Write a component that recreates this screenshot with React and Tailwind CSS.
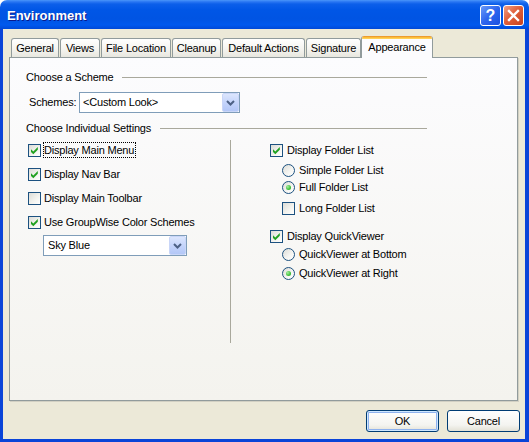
import React from "react";

function Check({ checked }) {
  return (
    <span className="relative block w-[13px] h-[13px] shrink-0 border border-[#1c5180] bg-[linear-gradient(135deg,#dcdcd7,#f4f4f0_60%,#ffffff)]">
      {checked && (
        <svg className="absolute left-0 top-0" width="11" height="11" viewBox="0 0 11 11">
          <path d="M2 4.2 L4.3 6.5 L8.8 2 V4.8 L4.3 9.3 L2 7 Z" fill="#21a121" />
        </svg>
      )}
    </span>
  );
}

function Radio({ checked }) {
  return (
    <span className="relative block w-[13px] h-[13px] shrink-0 rounded-full border border-[#1c5180] bg-[linear-gradient(135deg,#dcdcd7,#f6f6f3_60%,#ffffff)]">
      {checked && (
        <span className="absolute left-[3px] top-[3px] w-[5px] h-[5px] rounded-full bg-[radial-gradient(circle_at_35%_35%,#a6eea0,#3fc03b_60%,#1f9a1f)]" />
      )}
    </span>
  );
}

function Row({ kind, checked, label, focus, gap, className }) {
  return (
    <div className={"flex items-center h-[16px] " + className}>
      {kind === "radio" ? <Radio checked={checked} /> : <Check checked={checked} />}
      <span
        className={
          "flex items-center h-[16px] pr-[1px] border whitespace-nowrap " +
          gap +
          " " +
          (focus ? "border-dotted border-black" : "border-transparent")
        }
      >
        {label}
      </span>
    </div>
  );
}

function Combo({ text, className }) {
  return (
    <div className={"flex items-stretch h-[21px] border border-[#7f9db9] bg-white " + className}>
      <span className="flex-1 flex items-center pl-[3px] whitespace-nowrap">{text}</span>
      <span className="w-[17px] flex items-center justify-center rounded-[2px] border border-[#c9d6f8] bg-[linear-gradient(#dce6fd,#c3d3fb_55%,#b3c7f7)]">
        <svg width="9" height="6" viewBox="0 0 9 6">
          <path d="M1 1 L4.5 4.5 L8 1" stroke="#4d6185" strokeWidth="2" fill="none" />
        </svg>
      </span>
    </div>
  );
}

function Tab({ children, className }) {
  return (
    <div
      className={
        "h-[19px] flex items-center justify-center border border-b-0 border-[#919b9c] rounded-t-[3px] bg-[linear-gradient(#ffffff,#f5f4f0_55%,#e8e7df)] whitespace-nowrap " +
        className
      }
    >
      {children}
    </div>
  );
}

function XpButton({ children, def }) {
  return (
    <div
      className={
        "w-[73px] h-[22px] flex items-center justify-center rounded-[3px] border border-[#003c74] bg-[linear-gradient(#ffffff,#f4f4f0_70%,#e3e1d6)] " +
        (def ? "shadow-[inset_0_0_0_1px_#cee7ff,inset_0_0_0_2px_#8fb2ee]" : "")
      }
    >
      {children}
    </div>
  );
}

export default function App() {
  return (
    <div className="w-[529px] h-[442px] flex flex-col font-['Liberation_Sans',Arial,sans-serif] text-[11px] tracking-[-0.2px] text-black select-none">
      <div className="h-[29px] shrink-0 flex items-center pt-[2px] pl-[7px] pr-[5px] rounded-t-[7px] bg-[linear-gradient(180deg,#4a96fa_0%,#2b78f3_6%,#0c5fea_14%,#0056e6_35%,#0054e3_65%,#0059ee_86%,#0049d8_100%)]">
        <span className="flex-1 mt-[1px] text-white font-bold text-[13px] tracking-normal [text-shadow:1px_1px_0_#0a1a8c]">
          Environment
        </span>
        <div className="w-[21px] h-[21px] mr-[2px] flex items-center justify-center rounded-[3px] border border-white bg-[linear-gradient(135deg,#6a9af7,#2d65ee_50%,#1a50e0)]">
          <span className="text-white font-bold text-[16px] leading-none tracking-normal">?</span>
        </div>
        <div className="w-[21px] h-[21px] flex items-center justify-center rounded-[3px] border border-white bg-[linear-gradient(135deg,#f0a085,#e0603b_45%,#c8411e)]">
          <svg width="19" height="19" viewBox="0 0 19 19">
            <path d="M5 5 L14 14 M14 5 L5 14" stroke="#ffffff" strokeWidth="2.4" strokeLinecap="square" />
          </svg>
        </div>
      </div>

      <div className="flex-1 flex flex-col bg-[#ece9d8] border-l-[3px] border-r-[4px] border-b-[3px] border-[#0a44d8]">
        <div className="flex items-end h-[21px] mt-[7px] ml-[8px]">
          <Tab className="w-[48px] mr-[1px]">General</Tab>
          <Tab className="w-[40px] mr-[1px]">Views</Tab>
          <Tab className="w-[70px] mr-[1px]">File Location</Tab>
          <Tab className="w-[49px] mr-[1px]">Cleanup</Tab>
          <Tab className="w-[83px] mr-[1px]">Default Actions</Tab>
          <Tab className="w-[55px]">Signature</Tab>
          <div className="relative z-10 w-[72px] h-[22px] -mb-[1px] flex flex-col rounded-t-[3px] overflow-hidden border-x border-[#919b9c] bg-[#fcfcfe]">
            <div className="h-[3px] -mx-[1px] bg-[linear-gradient(#e68b2c,#ffc73c_60%,#ffd66a)]" />
            <div className="flex-1 flex items-center justify-center pb-[3px] whitespace-nowrap">Appearance</div>
          </div>
        </div>

        <div className="ml-[6px] w-[509px] h-[344px] shrink-0 flex flex-col pl-[16px] border border-[#919b9c] shadow-[1px_1px_0_#d2d0c3] bg-[linear-gradient(#fcfcfe,#f4f3ee)]">
          <div className="mt-[12px] h-[14px] w-[401px] flex items-center">
            <span className="whitespace-nowrap">Choose a Scheme</span>
            <span className="flex-1 ml-[8px] h-px bg-[#a9a89c]" />
          </div>
          <div className="mt-[8px] h-[21px] flex items-center">
            <span className="ml-[3px] w-[50px]">Schemes:</span>
            <Combo text="<Custom Look>" className="w-[161px]" />
          </div>
          <div className="mt-[8px] h-[14px] w-[401px] flex items-center">
            <span className="whitespace-nowrap">Choose Individual Settings</span>
            <span className="flex-1 ml-[9px] h-px bg-[#a9a89c]" />
          </div>

          <div className="mt-[5px] h-[203px] flex">
            <div className="w-[204px] pl-[2px] flex flex-col">
              <Row checked label="Display Main Menu" focus gap="ml-[2px]" className="mt-[2px]" />
              <Row checked label="Display Nav Bar" gap="ml-[2px]" className="mt-[8px]" />
              <Row label="Display Main Toolbar" gap="ml-[2px]" className="mt-[8px]" />
              <Row checked label="Use GroupWise Color Schemes" gap="ml-[2px]" className="mt-[8px]" />
              <Combo text="Sky Blue" className="w-[144px] mt-[5px] ml-[15px] [&>span:first-child]:pl-[4px]" />
            </div>
            <div className="w-px bg-[#a9a89c]" />
            <div className="pl-[39px] flex flex-col">
              <Row checked label="Display Folder List" gap="ml-[3px]" className="mt-[2px]" />
              <Row kind="radio" label="Simple Folder List" gap="ml-[3px]" className="mt-[4px] ml-[12px]" />
              <Row kind="radio" checked label="Full Folder List" gap="ml-[3px]" className="mt-[1px] ml-[12px]" />
              <Row label="Long Folder List" gap="ml-[3px]" className="mt-[5px] ml-[12px]" />
              <Row checked label="Display QuickViewer" gap="ml-[3px]" className="mt-[12px]" />
              <Row kind="radio" label="QuickViewer at Bottom" gap="ml-[3px]" className="mt-[2px] ml-[12px]" />
              <Row kind="radio" checked label="QuickViewer at Right" gap="ml-[3px]" className="mt-[3px] ml-[12px]" />
            </div>
          </div>
        </div>

        <div className="mt-[9px] flex justify-end gap-[8px] pr-[5px]">
          <XpButton def>OK</XpButton>
          <XpButton>Cancel</XpButton>
        </div>
      </div>
    </div>
  );
}
